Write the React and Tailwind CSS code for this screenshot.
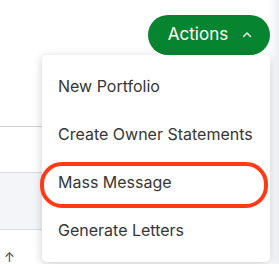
import React from "react";

const items = ["New Portfolio", "Create Owner Statements", "Mass Message", "Generate Letters"];

const App = () => {
  return (
    <div
      className="relative w-[279px] h-[264px] overflow-hidden bg-white"
      style={{ fontFamily: "Inter, 'Noto Sans', sans-serif" }}
    >
      {/* page behind the menu */}
      <div className="absolute inset-0 flex flex-col">
        <div className="h-[127px] border-b border-[#cfd2d6]" />
        <div className="h-[46px] border-b border-[#d9dce0]" />
        <div className="h-[57px] bg-[#f3f5f9] border-b border-[#d9dce0]" />
        <div className="flex-1 flex items-end pl-[4px] text-[13px] leading-none text-[#444]">↑</div>
      </div>
      <div className="absolute top-0 right-0 h-full w-[10px] bg-gradient-to-r from-white to-[#eceef1]" />

      {/* header */}
      <div className="relative flex justify-end pt-[15px] pr-[9px]">
        <button className="flex items-center justify-center gap-[14px] w-[122px] h-[40px] rounded-full bg-[#078430] text-white text-[17px] pl-[2px]">
          <span>Actions</span>
          <svg width="10" height="10" viewBox="0 0 10 10" fill="none">
            <path d="M1.5 6.5 L5 3 L8.5 6.5" stroke="white" strokeWidth="1.3" strokeLinecap="round" strokeLinejoin="round" />
          </svg>
        </button>
      </div>

      {/* dropdown */}
      <div className="absolute left-[42px] top-[55px] w-[228px] h-[207px] bg-white rounded-[5px] shadow-[0_2px_10px_rgba(0,0,0,0.2)] pt-[7px]">
        {items.map((item) => (
          <div key={item} className="h-[48px] flex items-center pl-[16px] text-[16px] text-[#363636]">
            {item}
          </div>
        ))}
      </div>

      {/* highlight */}
      <div className="absolute left-[40px] top-[162px] w-[228px] h-[46px] rounded-[22px] border-4 border-[#ff3a14]" />
    </div>
  );
};

export default App;
